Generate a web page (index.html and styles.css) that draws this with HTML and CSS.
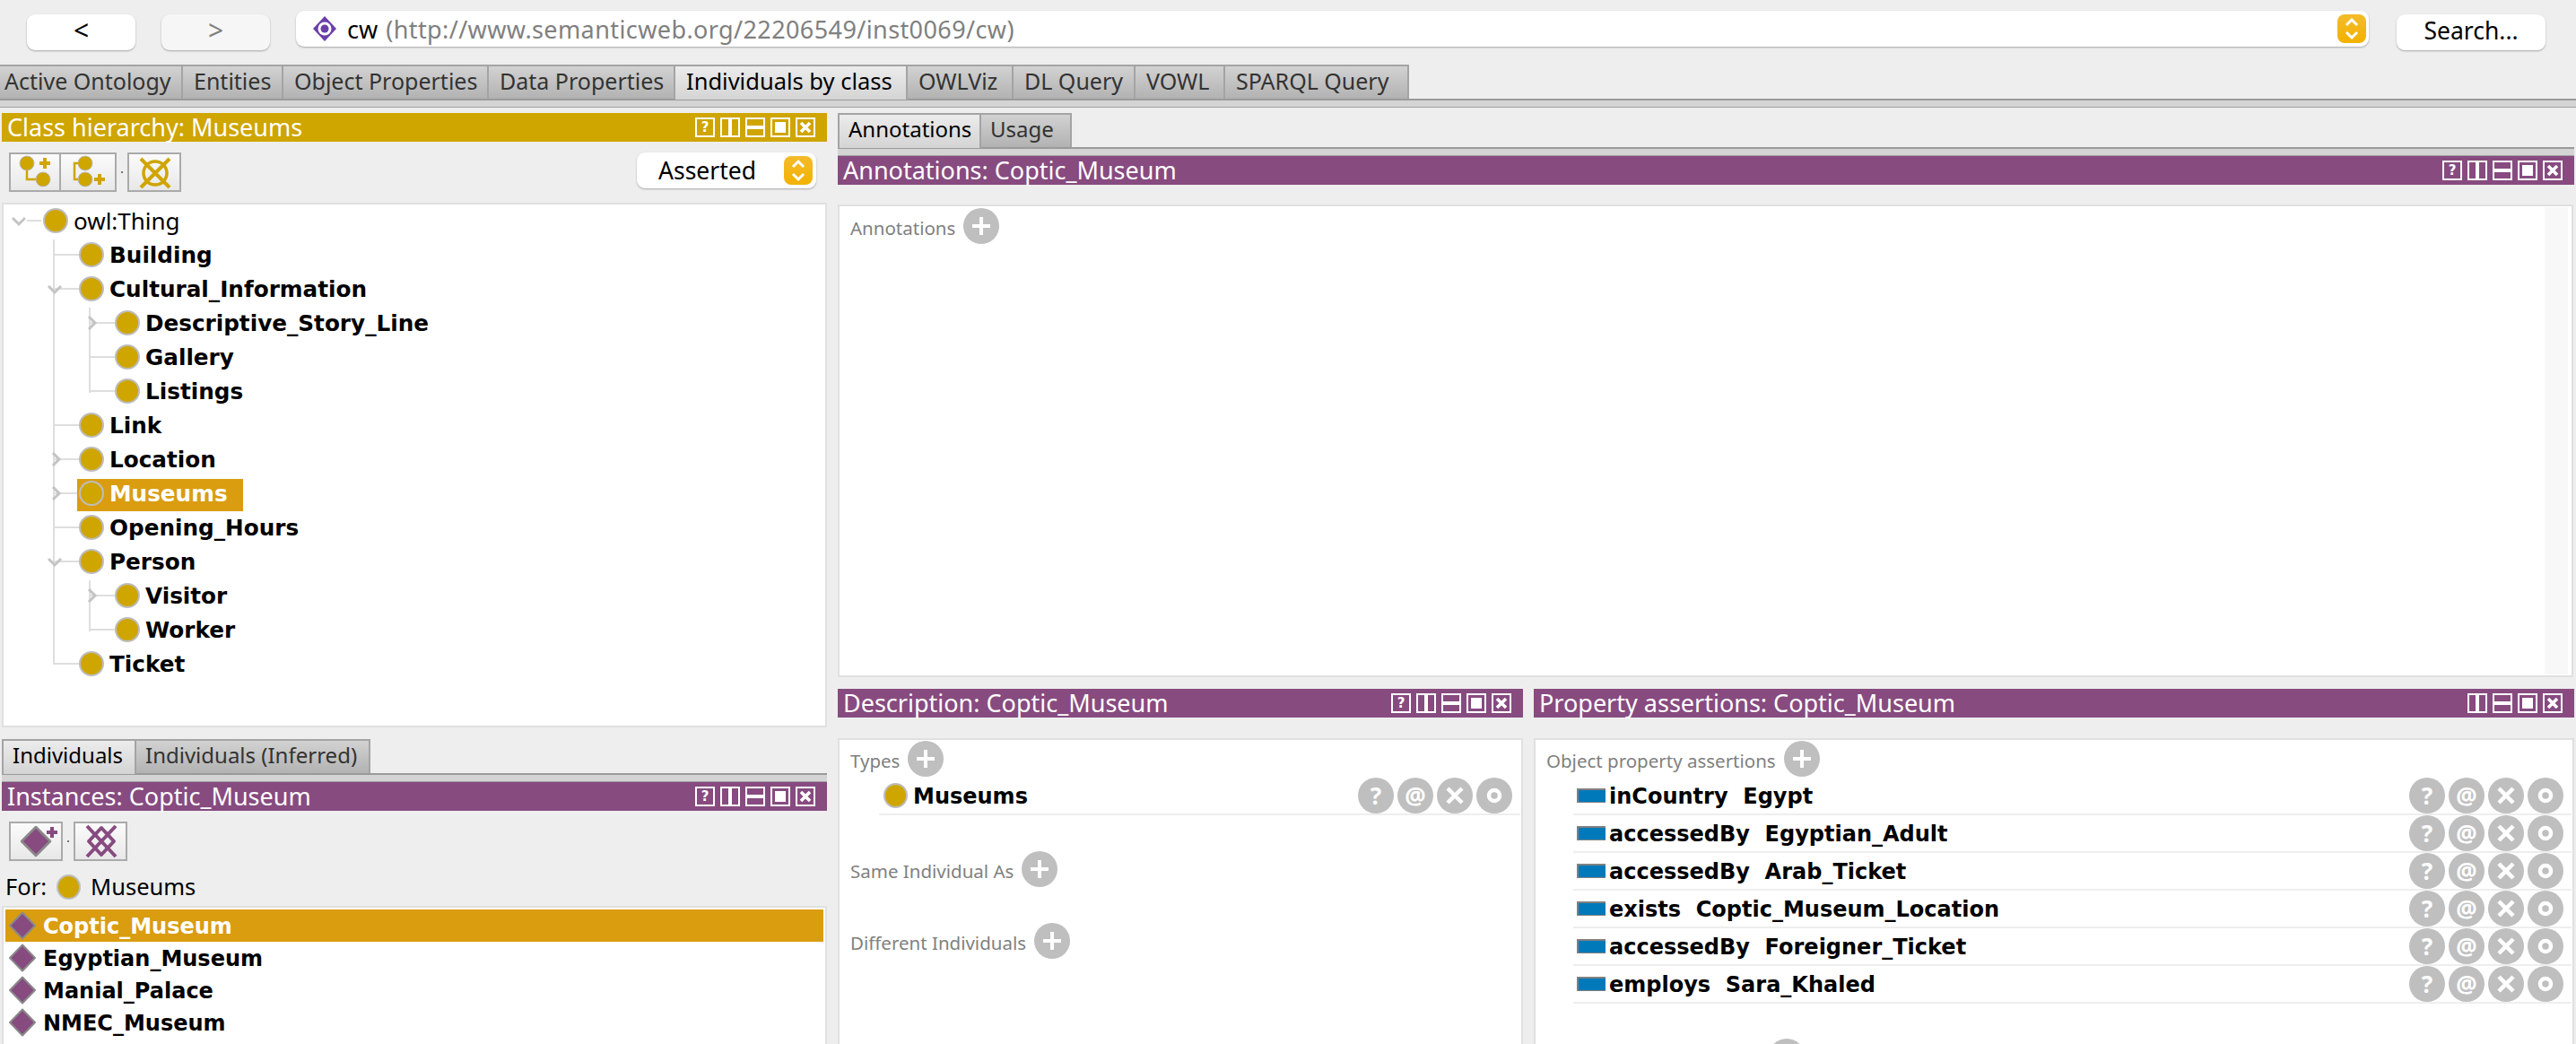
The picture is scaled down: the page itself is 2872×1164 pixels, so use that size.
FILE: index.html
```html
<!DOCTYPE html>
<html lang="en">
<head>
<meta charset="utf-8">
<title>Protégé</title>
<link rel="stylesheet" href="styles.css">
</head>
<body>
<svg class="defs" width="0" height="0" aria-hidden="true">
  <symbol id="i-vsplit" viewBox="0 0 22 22"><rect x="1" y="1" width="20" height="20" fill="none" stroke="#fff" stroke-width="2"/><rect x="9" y="1" width="4" height="20" fill="#fff"/></symbol>
  <symbol id="i-hsplit" viewBox="0 0 22 22"><rect x="1" y="1" width="20" height="20" fill="none" stroke="#fff" stroke-width="2"/><rect x="1" y="9" width="20" height="4" fill="#fff"/></symbol>
  <symbol id="i-max" viewBox="0 0 22 22"><rect x="1" y="1" width="20" height="20" fill="none" stroke="#fff" stroke-width="2"/><rect x="5" y="5" width="12" height="12" fill="#fff"/></symbol>
  <symbol id="i-close" viewBox="0 0 22 22"><rect x="1" y="1" width="20" height="20" fill="none" stroke="#fff" stroke-width="2"/><path d="M6 6L16 16M16 6L6 16" stroke="#fff" stroke-width="3.6"/></symbol>
  <symbol id="i-plus" viewBox="0 0 40 40"><circle cx="20" cy="20" r="20" fill="#bfbfbf"/><path d="M20 10V30M10 20H30" stroke="#fff" stroke-width="4"/></symbol>
  <symbol id="i-x" viewBox="0 0 40 40"><circle cx="20" cy="20" r="20" fill="#bfbfbf"/><path d="M12 12L28 28M28 12L12 28" stroke="#fff" stroke-width="4.5"/></symbol>
  <symbol id="i-o" viewBox="0 0 40 40"><circle cx="20" cy="20" r="20" fill="#bfbfbf"/><circle cx="20" cy="20" r="6" fill="none" stroke="#fff" stroke-width="4.5"/></symbol>
  <symbol id="i-down" viewBox="0 0 16 12"><path d="M1 2L8 9L15 2" fill="none" stroke="#c4c4c4" stroke-width="3"/></symbol>
  <symbol id="i-right" viewBox="0 0 12 16"><path d="M2 1L9 8L2 15" fill="none" stroke="#c4c4c4" stroke-width="3"/></symbol>
  <symbol id="i-step" viewBox="0 0 32 32"><path d="M10 12L16 6L22 12M10 20L16 26L22 20" fill="none" stroke="#fff" stroke-width="3"/></symbol>
  <symbol id="i-diamond" viewBox="0 0 32 32"><path d="M16 1.5L30 16L16 30.500L2 16Z" fill="#874b80" stroke="#8a8a8a" stroke-width="2" stroke-linejoin="round"/></symbol>
</svg>

<header class="topbar">
  <button class="navbtn">&lt;</button>
  <button class="navbtn navbtn-off">&gt;</button>
  <div class="ontcombo">
    <svg class="ont-icon" viewBox="0 0 28 28"><path d="M14 0L27 14L14 28L1 14Z" fill="#6b3fa8"/><circle cx="14" cy="14" r="7.5" fill="#fff"/><circle cx="14" cy="14" r="4.500" fill="#6b3fa8"/></svg>
    <span class="ont-name">cw</span>
    <span class="ont-iri">(http://www.semanticweb.org/22206549/inst0069/cw)</span>
    <span class="stepper stepper-wide"><svg class="step-svg"><use href="#i-step"/></svg></span>
  </div>
  <button class="searchbtn">Search...</button>
</header>

<nav class="tabbar">
  <span class="tab tab-first">Active Ontology</span>
  <span class="tab">Entities</span>
  <span class="tab">Object Properties</span>
  <span class="tab">Data Properties</span>
  <span class="tab tab-on">Individuals by class</span>
  <span class="tab">OWLViz</span>
  <span class="tab">DL Query</span>
  <span class="tab">VOWL</span>
  <span class="tab">SPARQL Query</span>
</nav>

<main class="workspace">
  <section class="leftcol">
    <div class="viewhead gold">
      <span>Class hierarchy: Museums</span>
      <span class="viewbtns">
        <span class="vb vb-help">?</span><svg class="vb"><use href="#i-vsplit"/></svg><svg class="vb"><use href="#i-hsplit"/></svg><svg class="vb"><use href="#i-max"/></svg><svg class="vb"><use href="#i-close"/></svg>
      </span>
    </div>
    <div class="toolbar">
      <span class="tbtn tbtn-a"><svg viewBox="0 0 54 40"><circle cx="18" cy="10" r="8" fill="#cfa500" stroke="#bbb"/><circle cx="36" cy="28" r="8" fill="#cfa500" stroke="#bbb"/><path d="M18 18V28H28" fill="none" stroke="#cfa500" stroke-width="2.500"/><path d="M38 4V16M32 10H44" stroke="#cfa500" stroke-width="4"/></svg></span>
      <span class="tbtn tbtn-b"><svg viewBox="0 0 58 40"><circle cx="26" cy="10" r="8" fill="#cfa500" stroke="#bbb"/><circle cx="26" cy="28" r="8" fill="#cfa500" stroke="#bbb"/><path d="M19 10H14V28H18" fill="none" stroke="#cfa500" stroke-width="2.500"/><path d="M42 22V34M36 28H48" stroke="#cfa500" stroke-width="4"/></svg></span>
      <span class="tdot"></span>
      <span class="tbtn tbtn-c"><svg viewBox="0 0 56 40"><circle cx="29" cy="21" r="13" fill="none" stroke="#cfa500" stroke-width="3.500"/><path d="M13 5L45 37M45 5L13 37" stroke="#cfa500" stroke-width="4"/></svg></span>
      <div class="assert"><span>Asserted</span><span class="stepper"><svg class="step-svg"><use href="#i-step"/></svg></span></div>
    </div>
    <div class="tree">
      <span class="vline vl-main"></span>
      <span class="vline vl-cult"></span>
      <span class="vline vl-person"></span>
      <div class="row l0"><svg class="tw tw-d"><use href="#i-down"/></svg><span class="node"><i class="cls"></i><span class="lbl-plain">owl:Thing</span></span></div>
      <div class="row l1"><span class="node"><i class="cls"></i><b>Building</b></span></div>
      <div class="row l1"><svg class="tw tw-d"><use href="#i-down"/></svg><span class="node"><i class="cls"></i><b>Cultural_Information</b></span></div>
      <div class="row l2"><svg class="tw tw-r"><use href="#i-right"/></svg><span class="node"><i class="cls"></i><b>Descriptive_Story_Line</b></span></div>
      <div class="row l2"><span class="node"><i class="cls"></i><b>Gallery</b></span></div>
      <div class="row l2"><span class="node"><i class="cls"></i><b>Listings</b></span></div>
      <div class="row l1"><span class="node"><i class="cls"></i><b>Link</b></span></div>
      <div class="row l1"><svg class="tw tw-r"><use href="#i-right"/></svg><span class="node"><i class="cls"></i><b>Location</b></span></div>
      <div class="row l1"><svg class="tw tw-r"><use href="#i-right"/></svg><span class="node node-sel"><i class="cls"></i><b>Museums</b></span></div>
      <div class="row l1"><span class="node"><i class="cls"></i><b>Opening_Hours</b></span></div>
      <div class="row l1"><svg class="tw tw-d"><use href="#i-down"/></svg><span class="node"><i class="cls"></i><b>Person</b></span></div>
      <div class="row l2"><svg class="tw tw-r"><use href="#i-right"/></svg><span class="node"><i class="cls"></i><b>Visitor</b></span></div>
      <div class="row l2"><span class="node"><i class="cls"></i><b>Worker</b></span></div>
      <div class="row l1"><span class="node"><i class="cls"></i><b>Ticket</b></span></div>
    </div>
    <div class="subtabs subtabs-ind">
      <span class="stab stab-on stab-ind">Individuals</span>
      <span class="stab stab-inf">Individuals (Inferred)</span>
    </div>
    <div class="viewhead purple viewhead-inst">
      <span>Instances: Coptic_Museum</span>
      <span class="viewbtns">
        <span class="vb vb-help">?</span><svg class="vb"><use href="#i-vsplit"/></svg><svg class="vb"><use href="#i-hsplit"/></svg><svg class="vb"><use href="#i-max"/></svg><svg class="vb"><use href="#i-close"/></svg>
      </span>
    </div>
    <div class="toolbar toolbar-inst">
      <span class="tbtn tbtn-d"><svg viewBox="0 0 56 40"><path d="M28 4L44 20L28 36L12 20Z" fill="#874b80" stroke="#8a8a8a" stroke-width="2.500" stroke-linejoin="round"/><path d="M46 4V16M40 10H52" stroke="#874b80" stroke-width="4"/></svg></span>
      <span class="tdot"></span>
      <span class="tbtn tbtn-d"><svg viewBox="0 0 56 40"><path d="M29 5L43 20L29 35L15 20Z" fill="none" stroke="#874b80" stroke-width="4" stroke-linejoin="round"/><path d="M13 3L45 37M45 3L13 37" stroke="#874b80" stroke-width="4"/></svg></span>
    </div>
    <div class="forline">For: <i class="cls cls-for"></i> <span>Museums</span></div>
    <div class="instlist">
      <div class="inst inst-sel"><svg class="dia"><use href="#i-diamond"/></svg><b>Coptic_Museum</b></div>
      <div class="inst"><svg class="dia"><use href="#i-diamond"/></svg><b>Egyptian_Museum</b></div>
      <div class="inst"><svg class="dia"><use href="#i-diamond"/></svg><b>Manial_Palace</b></div>
      <div class="inst"><svg class="dia"><use href="#i-diamond"/></svg><b>NMEC_Museum</b></div>
    </div>
  </section>

  <section class="rightcol">
    <div class="subtabs subtabs-ann">
      <span class="stab stab-on stab-ann">Annotations</span>
      <span class="stab stab-usage">Usage</span>
    </div>
    <div class="viewhead purple viewhead-ann">
      <span>Annotations: Coptic_Museum</span>
      <span class="viewbtns viewbtns-ann">
        <span class="vb vb-help">?</span><svg class="vb"><use href="#i-vsplit"/></svg><svg class="vb"><use href="#i-hsplit"/></svg><svg class="vb"><use href="#i-max"/></svg><svg class="vb"><use href="#i-close"/></svg>
      </span>
    </div>
    <div class="annpanel">
      <div class="anncontent"><div class="sect"><span class="sectlabel">Annotations</span><svg class="plus"><use href="#i-plus"/></svg></div></div>
      <div class="gutter"></div>
    </div>
    <div class="lowergrid">
      <div class="lowercol">
        <div class="viewhead purple">
          <span>Description: Coptic_Museum</span>
          <span class="viewbtns viewbtns-desc">
            <span class="vb vb-help">?</span><svg class="vb"><use href="#i-vsplit"/></svg><svg class="vb"><use href="#i-hsplit"/></svg><svg class="vb"><use href="#i-max"/></svg><svg class="vb"><use href="#i-close"/></svg>
          </span>
        </div>
        <div class="framepanel">
          <div class="sect"><span class="sectlabel">Types</span><svg class="plus"><use href="#i-plus"/></svg></div>
          <div class="frow frow-type">
            <i class="cls cls-type"></i><b>Museums</b>
            <span class="acts"><span class="circ">?</span><span class="circ">@</span><svg class="plus"><use href="#i-x"/></svg><svg class="plus"><use href="#i-o"/></svg></span>
          </div>
          <div class="sect sect-same"><span class="sectlabel">Same Individual As</span><svg class="plus"><use href="#i-plus"/></svg></div>
          <div class="sect sect-diff"><span class="sectlabel">Different Individuals</span><svg class="plus"><use href="#i-plus"/></svg></div>
        </div>
      </div>
      <div class="lowercol">
        <div class="viewhead purple">
          <span>Property assertions: Coptic_Museum</span>
          <span class="viewbtns viewbtns-prop">
            <svg class="vb"><use href="#i-vsplit"/></svg><svg class="vb"><use href="#i-hsplit"/></svg><svg class="vb"><use href="#i-max"/></svg><svg class="vb"><use href="#i-close"/></svg>
          </span>
        </div>
        <div class="framepanel">
          <div class="sect"><span class="sectlabel">Object property assertions</span><svg class="plus"><use href="#i-plus"/></svg></div>
          <div class="frow frow-prop"><i class="objprop"></i><b>inCountry&nbsp; Egypt</b><span class="acts"><span class="circ">?</span><span class="circ">@</span><svg class="plus"><use href="#i-x"/></svg><svg class="plus"><use href="#i-o"/></svg></span></div>
          <div class="frow frow-prop"><i class="objprop"></i><b>accessedBy&nbsp; Egyptian_Adult</b><span class="acts"><span class="circ">?</span><span class="circ">@</span><svg class="plus"><use href="#i-x"/></svg><svg class="plus"><use href="#i-o"/></svg></span></div>
          <div class="frow frow-prop"><i class="objprop"></i><b>accessedBy&nbsp; Arab_Ticket</b><span class="acts"><span class="circ">?</span><span class="circ">@</span><svg class="plus"><use href="#i-x"/></svg><svg class="plus"><use href="#i-o"/></svg></span></div>
          <div class="frow frow-prop"><i class="objprop"></i><b>exists&nbsp; Coptic_Museum_Location</b><span class="acts"><span class="circ">?</span><span class="circ">@</span><svg class="plus"><use href="#i-x"/></svg><svg class="plus"><use href="#i-o"/></svg></span></div>
          <div class="frow frow-prop"><i class="objprop"></i><b>accessedBy&nbsp; Foreigner_Ticket</b><span class="acts"><span class="circ">?</span><span class="circ">@</span><svg class="plus"><use href="#i-x"/></svg><svg class="plus"><use href="#i-o"/></svg></span></div>
          <div class="frow frow-prop"><i class="objprop"></i><b>employs&nbsp; Sara_Khaled</b><span class="acts"><span class="circ">?</span><span class="circ">@</span><svg class="plus"><use href="#i-x"/></svg><svg class="plus"><use href="#i-o"/></svg></span></div>
          <div class="sect sect-next"><svg class="plus"><use href="#i-plus"/></svg></div>
        </div>
      </div>
    </div>
  </section>
</main>
</body>
</html>
```
FILE: styles.css
```css
* { box-sizing: border-box; }
html, body { margin: 0; padding: 0; }
body {
  width: 2872px;
  height: 1164px;
  overflow: hidden;
  background: #eeeeee;
  font-family: "Noto Sans", "DejaVu Sans", sans-serif;
  font-size: 24px;
  color: #000;
}
.defs { position: absolute; }
i { display: block; font-style: normal; }

/* top bar */
.topbar {
  height: 72px;
  display: flex;
  align-items: flex-start;
  padding: 12px 0 0 30px;
}
.navbtn, .searchbtn {
  height: 40px;
  margin-top: 4px;
  border: 0;
  border-radius: 9px;
  background: #fff;
  box-shadow: 0 1px 2px rgba(0,0,0,.3);
  font-family: inherit;
  font-size: 26.500px;
  line-height: 1;
  color: #000;
  padding: 0 0 4px;
}
.navbtn { width: 121px; margin-right: 29px; font-size: 30px; }
.navbtn-off { background: #f6f6f6; color: #808080; }
.ontcombo {
  width: 2311px;
  height: 40px;
  background: #fff;
  border-radius: 9px;
  box-shadow: 0 1px 2px rgba(0,0,0,.3);
  display: flex;
  align-items: center;
  padding: 0 3px 0 18px;
  font-size: 27px;
  line-height: 1;
}
.ont-icon { width: 28px; height: 28px; margin-right: 11px; flex: none; }
.ont-name { margin-right: 9px; }
.ont-iri { color: #808080; flex: 1; letter-spacing: .4px; white-space: nowrap; }
.searchbtn { width: 166px; margin-left: 31px; }
.stepper {
  display: flex;
  align-items: center;
  justify-content: center;
  width: 32px;
  height: 32px;
  border-radius: 8px;
  background: linear-gradient(#f4bb2a, #f2b200);
  flex: none;
}
.step-svg { width: 32px; height: 32px; display: block; }

/* main tabs */
.tabbar {
  height: 48px;
  display: flex;
  align-items: flex-start;
  background: linear-gradient(#eeeeee 38px, #9a9a9a 38px, #9a9a9a 40px, #d4d4d4 40px, #d4d4d4 47px, #a0a0a0 47px);
}
.tab {
  height: 38px;
  padding: 0 0 0 12px;
  font-size: 25px;
  line-height: 33px;
  background: linear-gradient(#d2d2d2, #b2b2b2);
  border-top: 2px solid #a4a4a4;
  border-right: 2px solid #a4a4a4;
  color: #333;
  white-space: nowrap;
  flex: none;
}
.tab:nth-child(1) { width: 204px; }
.tab:nth-child(2) { width: 112px; }
.tab:nth-child(3) { width: 229px; }
.tab:nth-child(4) { width: 208px; }
.tab:nth-child(5) { width: 259px; }
.tab:nth-child(6) { width: 118px; }
.tab:nth-child(7) { width: 136px; }
.tab:nth-child(8) { width: 100px; }
.tab:nth-child(9) { width: 205px; }
.tab-first { padding-left: 5px; }
.tab-on { background: linear-gradient(#ececec, #d4d4d4); color: #000; height: 39px; font-size: 25.500px; }

/* workspace */
.workspace {
  height: 1044px;
  display: flex;
  padding: 6px 0 0 2px;
  overflow: hidden;
}
.leftcol { width: 920px; flex: none; margin-right: 12px; }
.rightcol { width: 1936px; flex: none; }
.viewhead {
  height: 32px;
  display: flex;
  align-items: center;
  justify-content: space-between;
  padding-left: 6px;
  color: #fff;
  white-space: nowrap;
  font-size: 27px;
  line-height: 32px;
}
.gold { background: #cfa500; }
.purple { background: #874b80; }
.viewbtns { display: flex; gap: 6px; padding-right: 13px; }
.vb { width: 22px; height: 22px; display: block; }
.vb-help {
  border: 2px solid #fff;
  font-family: "DejaVu Sans", sans-serif;
  font-weight: 700;
  font-size: 15px;
  line-height: 18px;
  text-align: center;
  color: #fff;
}

/* toolbar */
.toolbar {
  height: 44px;
  margin: 12px 0;
  padding-left: 8px;
  display: flex;
  align-items: center;
}
.tbtn {
  display: block;
  height: 44px;
  border: 2px solid #aaaaaa;
  background: linear-gradient(#fbfbfb, #e8e8e8);
}
.tbtn svg { display: block; width: 100%; height: 100%; }
.tbtn-a { width: 58px; }
.tbtn-b { width: 62px; border-left: 0; }
.tbtn-c { width: 60px; }
.tbtn-d { width: 60px; }
.tdot {
  width: 12px;
  display: flex;
  justify-content: center;
}
.tdot::before { content: ""; width: 2px; height: 2px; background: #777; }
.assert {
  margin: 0 12px 4px auto;
  width: 200px;
  height: 40px;
  border-radius: 9px;
  background: #fff;
  box-shadow: 0 1px 2px rgba(0,0,0,.3);
  display: flex;
  align-items: center;
  justify-content: space-between;
  padding: 0 4px 0 24px;
  font-size: 26.500px;
  line-height: 1;
}

/* tree */
.tree {
  position: relative;
  height: 585px;
  border: 2px solid #e0e0e0;
  background: #fff;
  overflow: hidden;
}
.vline { position: absolute; width: 2px; background: #dedede; }
.vl-main { left: 55px; top: 39px; height: 474px; }
.vl-cult { left: 95px; top: 115px; height: 95px; }
.vl-person { left: 95px; top: 419px; height: 57px; }
.row { position: relative; height: 38px; display: flex; align-items: flex-start; }
.l0 { padding-left: 42px; }
.l1 { padding-left: 82px; }
.l2 { padding-left: 122px; }
.row::before {
  content: "";
  position: absolute;
  top: 17px;
  height: 2px;
  background: #dedede;
}
.l0::before { left: 26px; width: 16px; }
.l1::before { left: 56px; width: 28px; }
.l2::before { left: 96px; width: 28px; }
.tw { position: absolute; }
.tw-d { width: 16px; height: 12px; top: 13px; }
.tw-r { width: 12px; height: 16px; top: 10px; }
.l0 .tw-d { left: 9px; }
.l1 .tw-d { left: 49px; }
.l1 .tw-r { left: 53px; }
.l2 .tw-r { left: 93px; }
.node {
  position: relative;
  height: 36px;
  margin-top: 2px;
  padding: 0 0 4px 2px;
  display: flex;
  align-items: center;
  gap: 6px;
  white-space: nowrap;
}
.node-sel { background: #da9d10; color: #fff; padding-right: 17px; }
.cls {
  width: 28px;
  height: 28px;
  border-radius: 50%;
  background: #cfa500;
  border: 2px solid #bdbdbd;
  flex: none;
}
b {
  font-family: "DejaVu Sans", sans-serif;
  font-weight: 700;
  font-size: 24px;
  line-height: 1;
  padding-top: 2px;
}
.node b { font-size: 24.700px; }
.lbl-plain { line-height: 1; font-size: 26px; }

/* sub tabs */
.subtabs {
  height: 48px;
  display: flex;
  align-items: flex-start;
  background: linear-gradient(#eeeeee 38px, #9a9a9a 38px, #9a9a9a 40px, #d4d4d4 40px, #d4d4d4 47px, #a0a0a0 47px);
}
.subtabs-ind { margin-top: 13px; }
.stab {
  height: 38px;
  padding: 0 0 0 10px;
  line-height: 32px;
  background: linear-gradient(#d2d2d2, #b2b2b2);
  border: 2px solid #a4a4a4;
  border-bottom: 0;
  border-left: 0;
  color: #333;
  white-space: nowrap;
}
.stab-on { background: linear-gradient(#ececec, #d4d4d4); color: #000; height: 39px; border-left: 2px solid #a4a4a4; }
.stab-ind { width: 150px; }
.stab-inf { width: 261px; }
.stab-ann { width: 160px; }
.stab-usage { width: 101px; }
.toolbar-inst { margin: 12px 0 0; }
.forline {
  height: 50px;
  padding: 8px 0 0 4px;
  display: flex;
  align-items: center;
  gap: 11px;
  font-size: 25.500px;
  line-height: 1;
}
.cls-for { width: 27px; }
.instlist {
  border: 2px solid #e0e0e0;
  background: #fff;
  padding: 2px;
  height: 300px;
}
.inst { height: 36px; display: flex; align-items: center; padding-left: 3px; gap: 7px; white-space: nowrap; }
.inst-sel { background: #da9d10; color: #fff; }
.dia { width: 32px; height: 32px; display: block; flex: none; }

/* right column */
.anncontent { flex: 1; padding: 2px 0 0 12px; }
.annpanel {
  height: 527px;
  margin-top: 22px;
  margin-right: 1px;
  border: 2px solid #e0e0e0;
  background: #fff;
  display: flex;
}
.gutter { width: 26px; margin: 1px 4px 1px 0; background: #f8f8f8; }
.lowergrid {
  display: flex;
  gap: 12px;
  margin-top: 13px;
}
.lowercol { flex: none; }
.lowercol:first-child { width: 764px; }
.lowercol:last-child { width: 1160px; }
.framepanel {
  height: 400px;
  margin-top: 23px;
  border: 2px solid #e0e0e0;
  background: #fff;
  overflow: hidden;
  padding: 1px 0 0 12px;
}
.sect { height: 40px; display: flex; align-items: center; gap: 9px; }
.sectlabel { font-size: 20.500px; color: #808080; line-height: 1; padding-top: 4px; }
.plus { width: 40px; height: 40px; display: block; flex: none; }
.frow {
  display: flex;
  align-items: center;
  height: 42px;
  border-bottom: 2px solid #eeeeee;
  white-space: nowrap;
}
.frow-type { margin: 1px 1px 0 32px; padding-left: 5px; gap: 6px; }
.frow-prop { margin: 0 1px 0 30px; padding-left: 4px; }
.sect + .frow-prop { margin-top: 1px; }
.cls-type { width: 27px; }
.acts {
  margin-left: auto;
  display: flex;
  gap: 4px;
  margin-right: 9px;
}
.circ {
  width: 40px;
  height: 40px;
  border-radius: 50%;
  background: #bfbfbf;
  color: #fff;
  font-weight: 700;
  font-size: 26px;
  line-height: 40px;
  text-align: center;
  display: block;
}
.objprop {
  width: 32px;
  height: 16px;
  margin-right: 4px;
  background: #0079ba;
  border: 2px solid #808080;
  border-width: 2px 0 1px 2px;
  flex: none;
}
.sect-same { margin-top: 40px; }
.sect-diff { margin-top: 40px; }
.sect-next { margin-top: 39px; padding-left: 248px; }
```
